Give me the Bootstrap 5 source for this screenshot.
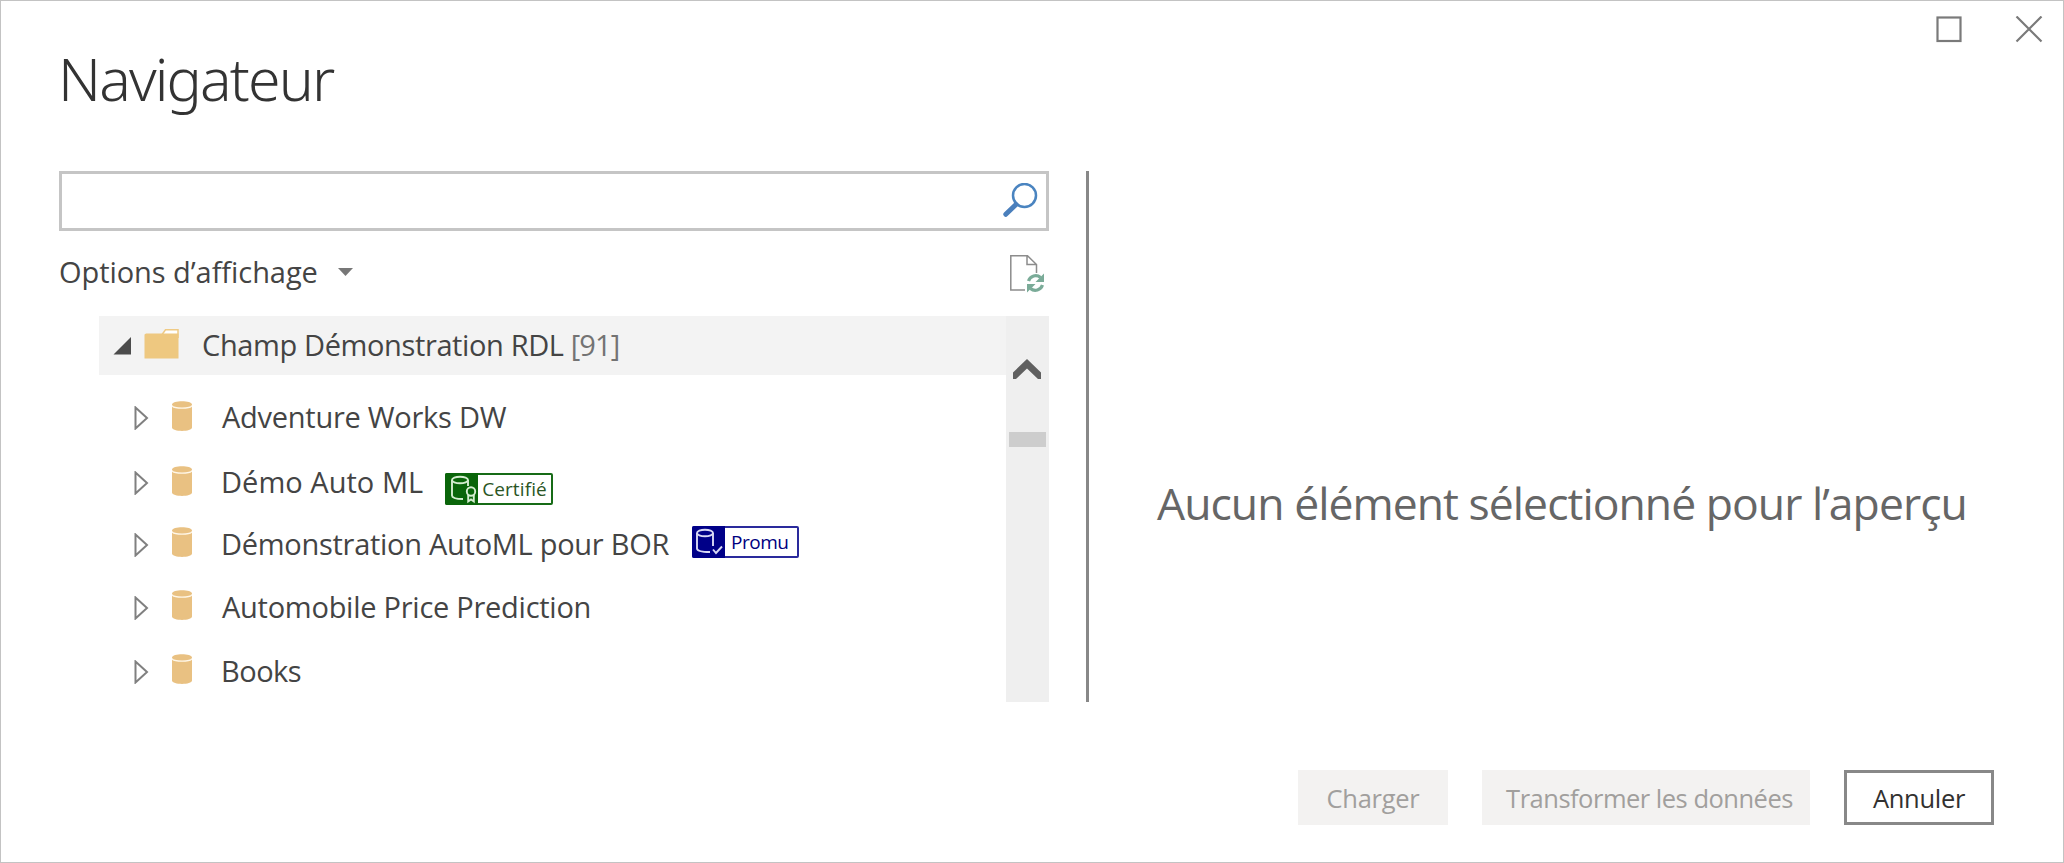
<!DOCTYPE html>
<html lang="fr">
<head>
<meta charset="utf-8">
<meta name="viewport" content="width=device-width, initial-scale=1">
<title>Navigateur</title>
<link href="https://cdn.jsdelivr.net/npm/bootstrap@5.3.0/dist/css/bootstrap.min.css" rel="stylesheet">
<style>
  body { font-family: "Open Sans", "Noto Sans", sans-serif; font-size: 29px; line-height: 1.3; color: #444; background: #fff; }
  svg { display: block; flex: none; }
  .dialog { height: 863px; border: 1px solid #c3c3c3; }
  .dialog-head { height: 170px; padding-left: 57px; }
  .dialog-title { font-family: "Noto Sans", sans-serif; font-weight: 300; font-size: 59px; line-height: 80px; letter-spacing: -1.87px; color: #333; margin: 37px 0 0; }
  .win-buttons { padding: 15px 20px 0 0; gap: 53px; }
  .dialog-main { height: 531px; padding-left: 58px; }
  .left-pane { width: 990px; }
  .search-box { height: 60px; border: 3px solid #c5c5c5; padding-right: 8px; }
  .view-options { height: 85px; padding-right: 5px; }
  .view-label { padding-bottom: 3px; letter-spacing: -.06px; }
  .view-caret { margin: 0 0 3px 20px; }
  .tree-wrap { height: 386px; margin-left: 40px; }
  .tree-root { height: 59px; background: #f3f3f3; padding-left: 14px; }
  .folder-icon { margin-left: 9px; }
  .root-name { margin-left: 21px; padding-bottom: 1px; letter-spacing: -.38px; }
  .root-count { color: #737373; letter-spacing: -.9px; }
  .tree-items { display: grid; grid-template-rows: 64px 66px 57px 69px 59px; padding: 11px 0 0 35px; }
  .db-icon { margin: 0 29px 5px 23px; }
  .item-name { padding-bottom: 2px; letter-spacing: -.28px; white-space: nowrap; }
  .item-a { margin-left: 1px; letter-spacing: -.26px; }
  .item-demo { letter-spacing: .03px; }
  .item-books { letter-spacing: -.5px; }
  .scroll-track { width: 43px; background: #efefef; padding-top: 43px; }
  .scroll-track svg { margin-right: 1px; }
  .scroll-thumb { width: 37px; height: 15px; background: #cdcdcd; margin-top: 53px; }
  .tag-chip { height: 32px; border: 2px solid; border-radius: 2px; font-size: 19px; }
  .tag-chip svg { margin: -2px 0 -2px -2px; }
  .tag-certified { width: 108px; margin: 11px 0 0 22px; border-color: #176b17; color: #2a5524; letter-spacing: .1px; }
  .tag-promoted { width: 107px; margin: -6px 0 0 23px; border-color: #2a2a9c; color: #000080; letter-spacing: -.5px; }
  .tag-certified span { padding: 2px 0 0 4px; }
  .tag-promoted span { padding: 2px 0 0 6px; }
  .pane-rule { width: 3px; background: #888; margin-left: 37px; }
  .preview { color: #666; font-size: 44.5px; letter-spacing: -.96px; padding: 303px 0 0 68px; white-space: nowrap; }
  .dialog-foot { padding: 68px 69px 0 0; gap: 34px; }
  .dlg-btn { height: 55px; border: 0; border-radius: 0; padding: 0; font-size: 25.5px; line-height: 57px; letter-spacing: -.3px; width: 150px; color: #a19f9d; }
  .dlg-btn:disabled { background: #f3f2f1; color: #a19f9d; opacity: 1; }
  .btn-transform { width: 328px; padding-left: 7px; letter-spacing: -.5px; }
  .btn-cancel { background: #fff; border: 3px solid #888; color: #323130; line-height: 51px; }
</style>
</head>
<body>
<svg width="0" height="0" class="position-absolute" aria-hidden="true">
  <symbol id="tri" viewBox="0 0 15 24"><path d="M1.5 1.5V22.5L13 12Z" fill="#fff" stroke="#808080" stroke-width="2"/></symbol>
  <symbol id="db" viewBox="0 0 20 30"><path d="M0 3.5C0-1 20-1 20 3.5V26.500C20 31 0 31 0 26.500Z" fill="#e9c182"/><path d="M0 4.500C1 8 19 8 20 4.500" fill="none" stroke="#fff7e8" stroke-width="1.300"/></symbol>
</svg>
<div class="dialog d-flex flex-column">
  <header class="dialog-head d-flex justify-content-between align-items-start">
    <h1 class="dialog-title">Navigateur</h1>
    <div class="win-buttons d-flex">
      <svg width="26" height="27" viewBox="0 0 26 27"><rect x="1.500" y="1.500" width="23" height="23.500" fill="none" stroke="#7a7a7a" stroke-width="2.200"/></svg>
      <svg width="28" height="27" viewBox="0 0 28 27"><path d="M1.500 .5L26.500 25.500M26.500 .5L1.500 25.500" stroke="#7a7a7a" stroke-width="2.200"/></svg>
    </div>
  </header>

  <main class="dialog-main d-flex">
    <section class="left-pane">
      <div class="search-box d-flex align-items-center justify-content-end">
        <svg width="36" height="36" viewBox="0 0 36 36"><circle cx="22.500" cy="12.500" r="11.500" fill="none" stroke="#4a84c0" stroke-width="2.500"/><path d="M14 21.500L3.800 31.300" stroke="#4a7fbc" stroke-width="5" stroke-linecap="round"/></svg>
      </div>
      <div class="view-options d-flex align-items-center">
        <span class="view-label">Options d’affichage</span>
        <svg class="view-caret" width="15" height="8" viewBox="0 0 15 8"><path d="M0 0H15L7.500 8Z" fill="#777"/></svg>
        <svg class="ms-auto" width="34" height="38" viewBox="0 0 34 38">
          <path d="M15 35H.800V.800H17.500L26.500 9.500V18M17 .800V9.500H26.500" fill="none" stroke="#8c8c8c" stroke-width="1.500"/>
          <path d="M18.500 26A7.500 7.500 0 0 1 30.500 22.500M32.500 30A7.500 7.500 0 0 1 20.500 33.500" fill="none" stroke="#7aab98" stroke-width="3.200"/>
          <path d="M34 18.500V27H25.500ZM17 37.500V29H25.500Z" fill="#7aab98"/>
        </svg>
      </div>
      <div class="tree-wrap d-flex">
        <div class="flex-grow-1">
          <div class="tree-root d-flex align-items-center">
            <svg width="19" height="20" viewBox="0 0 19 20"><path d="M.500 18.500L18 1V18.500Z" fill="#4c4c4c"/></svg>
            <svg class="folder-icon" width="40" height="36" viewBox="0 0 40 36"><path d="M20 8L24.500 1.700H37V10" fill="#fff" stroke="#efca84" stroke-width="1.500"/><path d="M5 5.500H22L24 5.500H37.500V30.500H3.500V6.500Z" fill="#eec880"/></svg>
            <span class="root-name">Champ Démonstration RDL <span class="root-count">[91]</span></span>
          </div>
          <div class="tree-items">
            <div class="d-flex align-items-center">
              <svg width="15" height="24"><use href="#tri"/></svg><svg class="db-icon" width="20" height="30"><use href="#db"/></svg>
              <span class="item-name item-a">Adventure Works DW</span>
            </div>
            <div class="d-flex align-items-center">
              <svg width="15" height="24"><use href="#tri"/></svg><svg class="db-icon" width="20" height="30"><use href="#db"/></svg>
              <span class="item-name item-demo">Démo Auto ML</span>
              <span class="tag-chip tag-certified d-flex align-items-center">
                <svg width="33" height="32" viewBox="0 0 33 32"><path d="M0 2Q0 0 2 0H33V32H2Q0 32 0 30Z" fill="#0a650a"/><g fill="none" stroke="#d5edd0" stroke-width="1.900"><ellipse cx="15" cy="7" rx="8" ry="3.200"/><path d="M7 7V22.500C7 25 11 26 18 26M23 7V13"/><circle cx="26" cy="18.500" r="4.200"/><path d="M23.200 22V28.500L26 26.500L28.800 28.500V22"/></g></svg>
                <span>Certifié</span>
              </span>
            </div>
            <div class="d-flex align-items-center">
              <svg width="15" height="24"><use href="#tri"/></svg><svg class="db-icon" width="20" height="30"><use href="#db"/></svg>
              <span class="item-name">Démonstration AutoML pour BOR</span>
              <span class="tag-chip tag-promoted d-flex align-items-center">
                <svg width="33" height="32" viewBox="0 0 33 32"><path d="M0 2Q0 0 2 0H33V32H2Q0 32 0 30Z" fill="#000088"/><g fill="none" stroke="#d9d9f5" stroke-width="1.900"><ellipse cx="13" cy="7" rx="8" ry="3.200"/><path d="M5 7V22.500C5 25 9 26 18 26M21 7V20"/><path d="M21 23.500L24 27L30 20.500"/></g></svg>
                <span>Promu</span>
              </span>
            </div>
            <div class="d-flex align-items-center">
              <svg width="15" height="24"><use href="#tri"/></svg><svg class="db-icon" width="20" height="30"><use href="#db"/></svg>
              <span class="item-name item-a">Automobile Price Prediction</span>
            </div>
            <div class="d-flex align-items-center">
              <svg width="15" height="24"><use href="#tri"/></svg><svg class="db-icon" width="20" height="30"><use href="#db"/></svg>
              <span class="item-name item-books">Books</span>
            </div>
          </div>
        </div>
        <div class="scroll-track d-flex flex-column align-items-center">
          <svg width="28" height="20" viewBox="0 0 28 20"><path d="M14 0L28 13.500V20H25L14 9.500L3 20H0V13.500Z" fill="#606060"/></svg>
          <div class="scroll-thumb"></div>
        </div>
      </div>
    </section>
    <div class="pane-rule"></div>
    <section class="preview flex-grow-1">Aucun élément sélectionné pour l’aperçu</section>
  </main>

  <footer class="dialog-foot d-flex justify-content-end">
    <button class="btn dlg-btn" type="button" disabled>Charger</button>
    <button class="btn dlg-btn btn-transform" type="button" disabled>Transformer les données</button>
    <button class="btn dlg-btn btn-cancel" type="button">Annuler</button>
  </footer>
</div>
<script src="https://cdn.jsdelivr.net/npm/bootstrap@5.3.0/dist/js/bootstrap.bundle.min.js"></script>
</body>
</html>
